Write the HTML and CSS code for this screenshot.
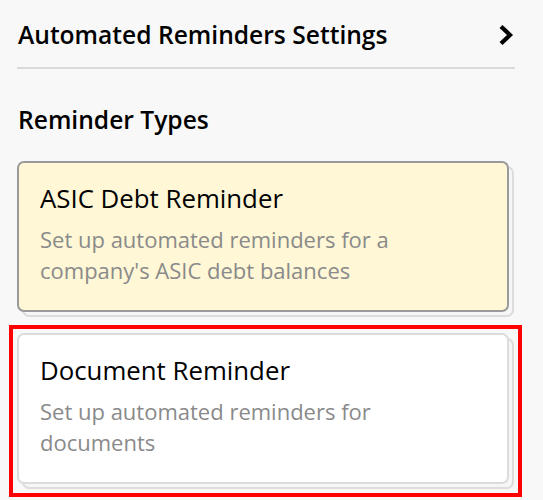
FILE: index.html
```html
<!DOCTYPE html>
<html>
<head>
<meta charset="utf-8">
<link rel="stylesheet" href="styles.css">
</head>
<body>
<div class="panel">
  <div class="settings-row">
    <span class="settings-title">Automated Reminders Settings</span>
    <svg class="chevron" width="16" height="22" viewBox="0 0 16 22"><path d="M3 2.5 L12 11 L3 19.5" fill="none" stroke="#000" stroke-width="4.2" stroke-linejoin="miter"/></svg>
  </div>
  <h2 class="section-title">Reminder Types</h2>
  <div class="cards">
    <div class="card card-active">
      <div class="card-title">ASIC Debt Reminder</div>
      <div class="card-desc">Set up automated reminders for a company's ASIC debt balances</div>
    </div>
    <div class="focus-slot">
      <div class="card card-plain">
        <div class="card-title">Document Reminder</div>
        <div class="card-desc">Set up automated reminders for documents</div>
      </div>
    </div>
  </div>
</div>
</body>
</html>
```
FILE: styles.css
```css
html, body {
  margin: 0;
  padding: 0;
  background: #f8f8f8;
}
body {
  font-family: "Open Sans", Lato, sans-serif;
  color: #000;
}
.panel {
  padding: 0 28px 0 17px;
  width: 498px;
}
.settings-row {
  display: flex;
  align-items: center;
  justify-content: space-between;
  height: 69px;
  padding-left: 1px;
  border-bottom: 2px solid #dadada;
  box-sizing: border-box;
  padding-top: 2px;
}
.settings-title {
  font-size: 24.6px;
  font-weight: 600;
}
.chevron {
  margin-right: 1px;
}
.section-title {
  margin: 0;
  padding: 33px 0 0 1px;
  font-size: 24.6px;
  font-weight: 600;
  line-height: 35px;
}
.cards {
  margin-top: 24px;
  display: flex;
  flex-direction: column;
  gap: 13px;
}
.card {
  width: 492px;
  height: 151px;
  box-sizing: border-box;
  border-radius: 7px;
  padding: 18px 21px 0 21px;
  box-shadow: 5px 5px 0 -2px #f6f6f6, 5px 5px 0 0 #dcdcdc;
}
.card-active {
  background: #fff7d6;
  border: 2px solid #9a9a9a;
}
.card-plain {
  background: #fff;
  border: 2px solid #dcdcdc;
}
.focus-slot {
  width: 513px;
  margin-left: -8px;
  padding: 4px 9px 9px 4px;
  border: 4px solid #ff0000;
  box-sizing: border-box;
}
.card-title {
  font-size: 25.8px;
  line-height: 35px;
}
.card-desc {
  margin-top: 8px;
  font-size: 22px;
  line-height: 31px;
  color: #8a8a8a;
  padding-right: 40px;
}
```
